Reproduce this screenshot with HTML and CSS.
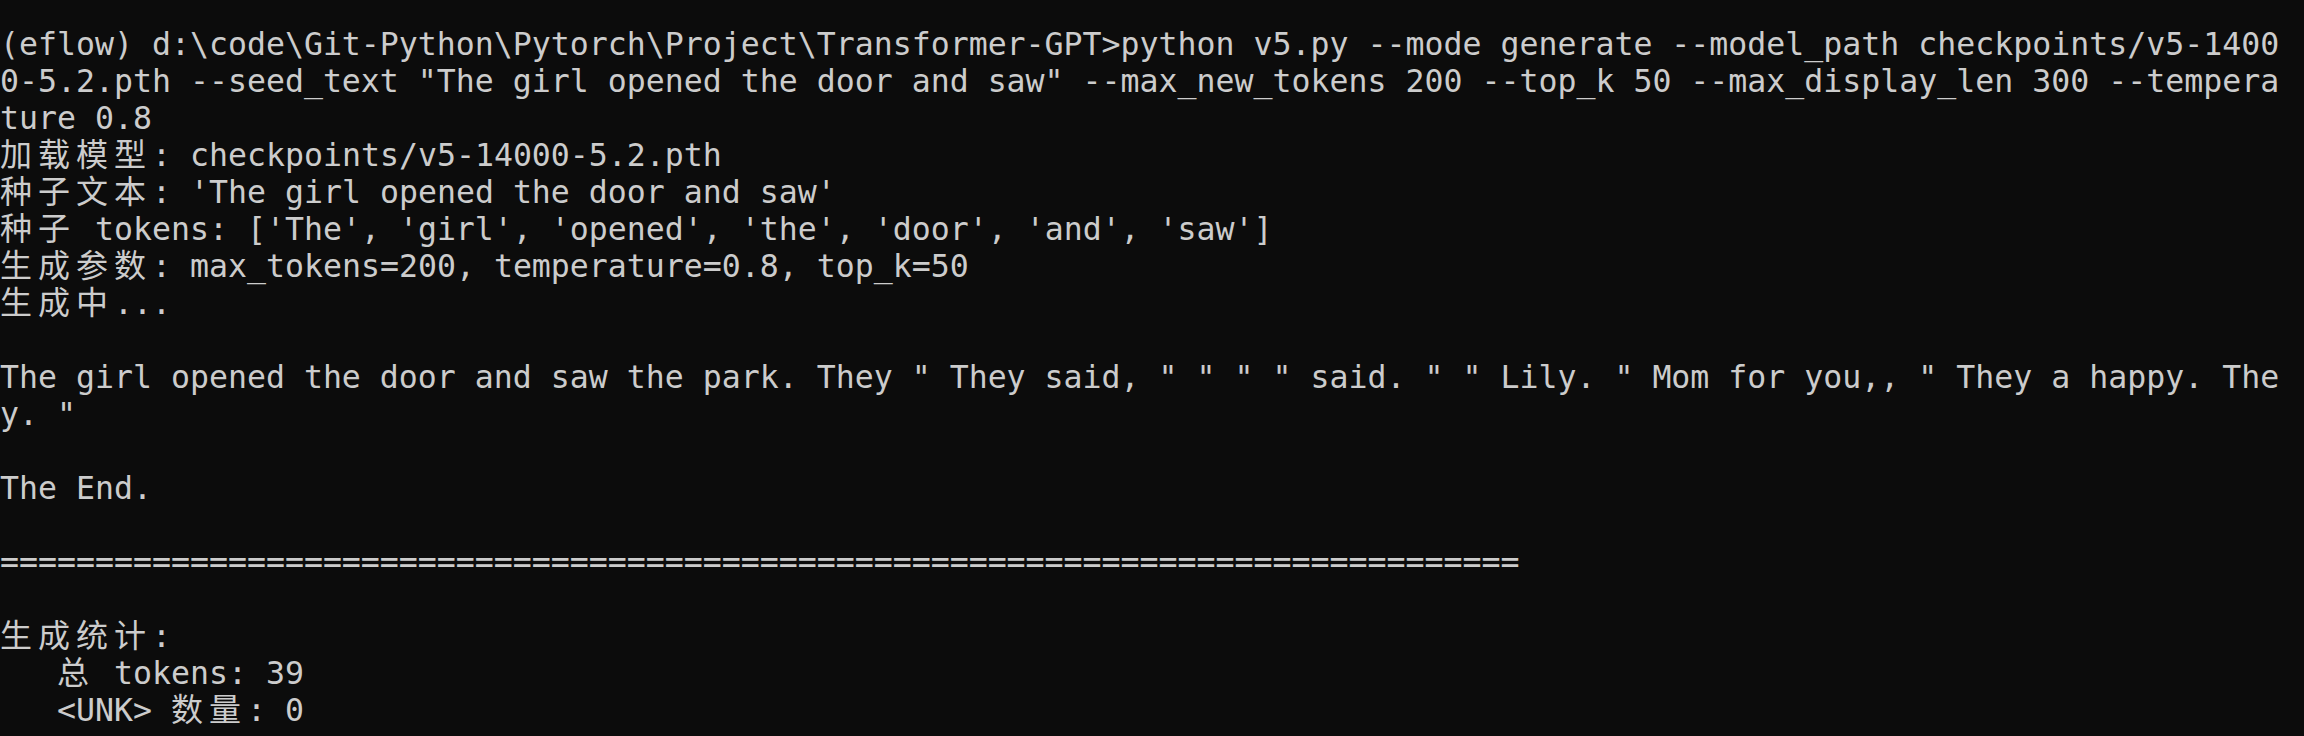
FILE: index.html
```html
<!DOCTYPE html>
<html lang="zh-CN">
<head>
<meta charset="utf-8">
<title>Terminal</title>
<link rel="stylesheet" href="styles.css">
</head>
<body>
<div class="term">
<div class="ln">(eflow) d:\code\Git-Python\Pytorch\Project\Transformer-GPT&gt;python v5.py --mode generate --model_path checkpoints/v5-1400</div>
<div class="ln">0-5.2.pth --seed_text "The girl opened the door and saw" --max_new_tokens 200 --top_k 50 --max_display_len 300 --tempera</div>
<div class="ln">ture 0.8</div>
<div class="ln"><span class="cjk">加载模型</span>: checkpoints/v5-14000-5.2.pth</div>
<div class="ln"><span class="cjk">种子文本</span>: 'The girl opened the door and saw'</div>
<div class="ln"><span class="cjk">种子</span> tokens: ['The', 'girl', 'opened', 'the', 'door', 'and', 'saw']</div>
<div class="ln"><span class="cjk">生成参数</span>: max_tokens=200, temperature=0.8, top_k=50</div>
<div class="ln"><span class="cjk">生成中</span>...</div>
<div class="ln"></div>
<div class="ln">The girl opened the door and saw the park. They " They said, " " " " said. " " Lily. " Mom for you,, " They a happy. The</div>
<div class="ln">y. "</div>
<div class="ln"></div>
<div class="ln">The End.</div>
<div class="ln"></div>
<div class="ln">================================================================================</div>
<div class="ln"></div>
<div class="ln"><span class="cjk">生成统计</span>:</div>
<div class="ln">   <span class="cjk">总</span> tokens: 39</div>
<div class="ln">   &lt;UNK&gt; <span class="cjk">数量</span>: 0</div>
</div>
</body>
</html>
```

FILE: styles.css
```css
html, body {
  margin: 0;
  padding: 0;
  background: #0c0c0c;
}

body {
  width: 2304px;
  height: 736px;
  overflow: hidden;
}

.term {
  padding-top: 26px;
  color: #cccccc;
  font-family: "DejaVu Sans Mono", monospace;
  font-size: 31.56px;
  line-height: 37px;
}

.ln {
  height: 37px;
  white-space: pre;
}

.cjk {
  display: inline-block;
  vertical-align: top;
  height: 37px;
  font-family: "Noto Sans CJK SC", sans-serif;
  font-size: 32px;
  letter-spacing: 6px;
  line-height: 31px;
}
```
